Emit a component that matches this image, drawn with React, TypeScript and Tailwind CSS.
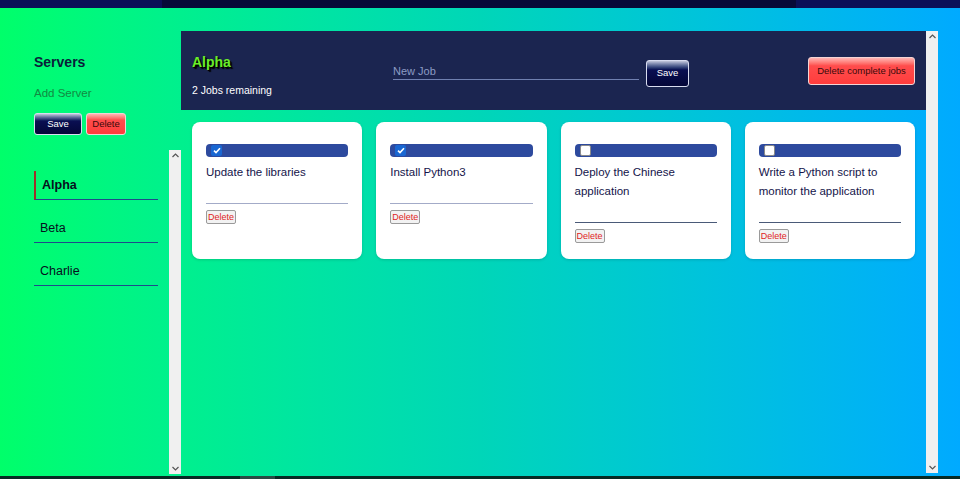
import React from 'react';

type Job = { id: number; text: string; done: boolean };

const jobs: Job[] = [
  { id: 1, text: 'Update the libraries', done: true },
  { id: 2, text: 'Install Python3', done: true },
  { id: 3, text: 'Deploy the Chinese application', done: false },
  { id: 4, text: 'Write a Python script to monitor the application', done: false },
];

const servers = ['Alpha', 'Beta', 'Charlie'];

const FakeScrollbar: React.FC = () => (
  <div className="w-[12px] shrink-0 bg-[#f0f0f0] flex flex-col justify-between items-center py-[3px]">
    <svg width="7" height="5" viewBox="0 0 7 5" className="text-[#555]">
      <path d="M0.5 4 L3.5 1 L6.5 4" fill="none" stroke="currentColor" strokeWidth="1.2" />
    </svg>
    <svg width="7" height="5" viewBox="0 0 7 5" className="text-[#555]">
      <path d="M0.5 1 L3.5 4 L6.5 1" fill="none" stroke="currentColor" strokeWidth="1.2" />
    </svg>
  </div>
);

const NavyButton: React.FC<{ label: string; className?: string }> = ({ label, className }) => (
  <button
    className={`rounded-[3px] border border-[#d8dcf0] bg-linear-to-b from-[#c4c8dc] via-[#0a0f52] via-35% to-[#040738] text-white text-[9.5px] ${className ?? ''}`}
  >
    {label}
  </button>
);

const RedButton: React.FC<{ label: string; className?: string }> = ({ label, className }) => (
  <button
    className={`rounded-[3px] border border-[#f4d4d4] bg-linear-to-b from-[#ffb4b4] via-[#ff4c4c] via-30% to-[#ff3c3c] text-[#3a0a0a] text-[9.5px] ${className ?? ''}`}
  >
    {label}
  </button>
);

const JobCard: React.FC<{ job: Job }> = ({ job }) => (
  <div className="bg-white rounded-[8px] shadow-[0_1px_3px_rgba(0,0,0,0.15)] pt-[22px] px-[14px] pb-[16px] flex flex-col">
    <div className="h-[13px] rounded-[4px] bg-[#2d4a9e] flex items-center pl-[5px]">
      {job.done ? (
        <div className="w-[11px] h-[11px] rounded-[2px] bg-[#1967d2] flex items-center justify-center">
          <svg width="8" height="7" viewBox="0 0 8 7">
            <path d="M1 3.6 L3 5.6 L7 1.2" fill="none" stroke="white" strokeWidth="1.6" />
          </svg>
        </div>
      ) : (
        <div className="w-[11px] h-[11px] rounded-[2px] bg-white border border-[#8a8a8a]" />
      )}
    </div>
    <p className="mt-[6px] text-[11.5px] leading-[19px] text-[#14144a]">{job.text}</p>
    <div className={`mt-[21px] h-px shrink-0 ${job.done ? 'bg-[#a3abc8]' : 'bg-[#4a5a78]'}`} />
    <div className="mt-[6px] flex">
      <button className="h-[14px] px-[1px] rounded-[2px] border border-[#9a9a9a] bg-[#f2f2f2] text-[9px] leading-[12px] text-[#e01e1e]">
        Delete
      </button>
    </div>
  </div>
);

export default function App() {
  return (
    <div className="w-[960px] h-[479px] flex flex-col overflow-hidden font-['Liberation_Sans',Arial,sans-serif]">
      <div className="h-[8px] shrink-0 bg-[#0b1057]">
        <div className="ml-[162px] w-[634px] h-full bg-[#070a38]" />
      </div>

      <div className="flex-1 flex bg-linear-to-r from-[#00ff6a] via-[#00d6b8] to-[#00aaff] min-h-0">
        <aside className="w-[181px] shrink-0 pl-[34px] flex flex-col pb-[2px]">
          <h2 className="mt-[46px] text-[14px] leading-[16px] font-bold text-[#0a1e3a]">Servers</h2>
          <input
            placeholder="Add Server"
            className="mt-[16px] w-[120px] bg-transparent outline-none text-[11.5px] leading-[14px] text-[#128a42] placeholder:text-[#128a42] placeholder:opacity-100"
          />
          <div className="mt-[13px] flex gap-[4px]">
            <NavyButton label="Save" className="w-[48px] h-[22px]" />
            <RedButton label="Delete" className="w-[40px] h-[22px]" />
          </div>
          <div className="mt-[15px] flex-1 flex min-h-0">
            <ul className="flex-1 pt-[21px] flex flex-col gap-[14px] pr-[11px]">
              {servers.map((s, i) => (
                <li
                  key={s}
                  className={`h-[29px] flex items-center border-b border-[#1f4a8a] text-[12.5px] text-[#06101e] ${
                    i === 0 ? 'border-l-2 border-l-[#a0302a] pl-[6px] font-bold' : 'pl-[6px]'
                  }`}
                >
                  {s}
                </li>
              ))}
            </ul>
            <FakeScrollbar />
          </div>
        </aside>

        <main className="w-[757px] mt-[23px] mb-[3px] flex">
          <div className="flex-1 flex flex-col">
            <header className="h-[79px] bg-[#1b2550] flex pl-[11px] pr-[11px]">
              <div className="w-[201px] pt-[23px]">
                <h1 className="text-[14px] leading-[16px] font-bold text-[#6aee2a] [text-shadow:1px_1px_0_#000,2px_2px_1px_#000]">
                  Alpha
                </h1>
                <p className="mt-[14px] text-[10.5px] leading-[12px] text-white">2 Jobs remaining</p>
              </div>
              <input
                placeholder="New Job"
                className="mt-[31px] w-[246px] h-[18px] self-start bg-transparent border-b border-[#7080b0] outline-none text-[11px] text-white placeholder:text-[#8c9bc4] placeholder:opacity-100"
              />
              <NavyButton label="Save" className="ml-[7px] mt-[29px] self-start w-[43px] h-[27px]" />
              <div className="flex-1" />
              <RedButton label="Delete complete jobs" className="mt-[26px] self-start w-[107px] h-[28px]" />
            </header>
            <div className="pt-[12px] pl-[11px] pr-[11px] grid grid-cols-4 gap-[14px] items-stretch">
              {jobs.map((j) => (
                <JobCard key={j.id} job={j} />
              ))}
            </div>
          </div>
          <FakeScrollbar />
        </main>
      </div>

      <div className="h-[3px] shrink-0 bg-[#062a24]">
        <div className="ml-[240px] w-[35px] h-full bg-[#2a4a44]" />
      </div>
    </div>
  );
}
